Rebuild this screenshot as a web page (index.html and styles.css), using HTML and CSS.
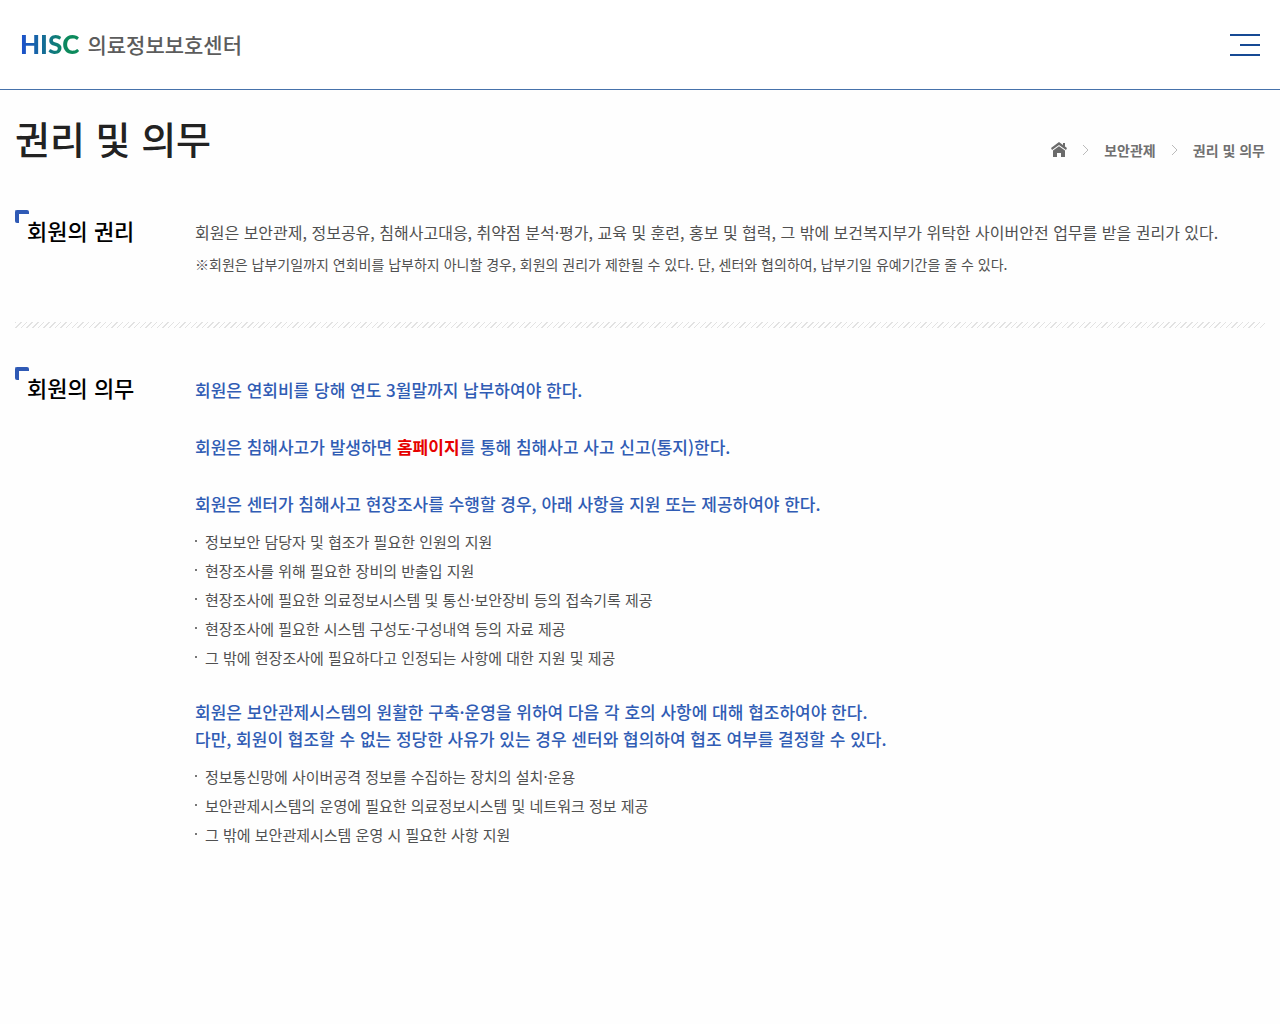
FILE: index.html
```
<!DOCTYPE html>
<html lang="ko">
<head>
<meta charset="utf-8">
<meta name="viewport" content="width=device-width, initial-scale=1">
<title>권리 및 의무 | 의료정보보호센터</title>
<link rel="stylesheet" href="styles.css">
</head>
<body>
<header class="site-header">
  <a class="logo" href="#"><span class="logo-mark">HISC</span><span class="logo-name">의료정보보호센터</span></a>
  <button class="menu-button" type="button" aria-label="메뉴">
    <svg width="30" height="22" viewBox="0 0 30 22" fill="#164a94" aria-hidden="true"><path d="M0 0h30v2H0zM10 10h20v2H10zM0 20h30v2H0z"/></svg>
  </button>
</header>
<main class="page">
  <div class="page-head">
    <h1>권리 및 의무</h1>
    <nav class="breadcrumb" aria-label="현재 위치">
      <a href="#" aria-label="홈"><svg width="16" height="16" viewBox="0 0 16 16" fill="#6b6b6b" aria-hidden="true"><path d="M8 0 0 6l1 2 7-5 7 5 1-2-2-1.500V1h-2v2zM8 4.300 2 8.600V15h4v-4h4v4h4V8.600z"/></svg></a>
      <svg width="7" height="12" viewBox="0 0 7 12" fill="none" stroke="#bbb" aria-hidden="true"><path d="m1 1 5 5-5 5"/></svg>
      <a href="#">보안관제</a>
      <svg width="7" height="12" viewBox="0 0 7 12" fill="none" stroke="#bbb" aria-hidden="true"><path d="m1 1 5 5-5 5"/></svg>
      <a href="#" aria-current="page">권리 및 의무</a>
    </nav>
  </div>
  <section class="section">
    <h2>회원의 권리</h2>
    <div class="section-body">
      <p class="text">회원은 보안관제, 정보공유, 침해사고대응, 취약점 분석·평가, 교육 및 훈련, 홍보 및 협력, 그 밖에 보건복지부가 위탁한 사이버안전 업무를 받을 권리가 있다.</p>
      <p class="note">※회원은 납부기일까지 연회비를 납부하지 아니할 경우, 회원의 권리가 제한될 수 있다. 단, 센터와 협의하여, 납부기일 유예기간을 줄 수 있다.</p>
    </div>
  </section>
  <hr class="divider">
  <section class="section">
    <h2>회원의 의무</h2>
    <div class="section-body">
      <p class="lead">회원은 연회비를 당해 연도 3월말까지 납부하여야 한다.</p>
      <p class="lead">회원은 침해사고가 발생하면 <a class="site-link" href="#">홈페이지</a>를 통해 침해사고 사고 신고(통지)한다.</p>
      <p class="lead">회원은 센터가 침해사고 현장조사를 수행할 경우, 아래 사항을 지원 또는 제공하여야 한다.</p>
      <ul class="items">
        <li>정보보안 담당자 및 협조가 필요한 인원의 지원</li>
        <li>현장조사를 위해 필요한 장비의 반출입 지원</li>
        <li>현장조사에 필요한 의료정보시스템 및 통신·보안장비 등의 접속기록 제공</li>
        <li>현장조사에 필요한 시스템 구성도·구성내역 등의 자료 제공</li>
        <li>그 밖에 현장조사에 필요하다고 인정되는 사항에 대한 지원 및 제공</li>
      </ul>
      <p class="lead">회원은 보안관제시스템의 원활한 구축·운영을 위하여 다음 각 호의 사항에 대해 협조하여야 한다.<br>다만, 회원이 협조할 수 없는 정당한 사유가 있는 경우 센터와 협의하여 협조 여부를 결정할 수 있다.</p>
      <ul class="items">
        <li>정보통신망에 사이버공격 정보를 수집하는 장치의 설치·운용</li>
        <li>보안관제시스템의 운영에 필요한 의료정보시스템 및 네트워크 정보 제공</li>
        <li>그 밖에 보안관제시스템 운영 시 필요한 사항 지원</li>
      </ul>
    </div>
  </section>
</main>
</body>
</html>
```

FILE: styles.css
```
*, *::before { box-sizing: border-box; margin: 0; padding: 0; }
body { font-family: "Noto Sans CJK KR", sans-serif; font-size: 16px; color: #505050; background: #fefefe; }
a { color: inherit; text-decoration: none; }

.site-header { display: flex; justify-content: space-between; align-items: center; height: 90px; padding: 0 20px; background: #fff; border-bottom: 1px solid #4672ab; }
.logo { display: flex; align-items: center; gap: 8px; padding-bottom: 2px; }
.logo-mark { font-family: Lato, sans-serif; font-weight: 900; font-size: 26px; background: linear-gradient(90deg, #1c4fd0, #0c8a5c 80%); -webkit-background-clip: text; background-clip: text; color: transparent; }
.logo-name { font-size: 21px; font-weight: 500; color: #5c5c5c; }
.menu-button { display: flex; border: 0; background: none; cursor: pointer; }

.page { padding: 18px 15px; }
.page-head { display: flex; justify-content: space-between; align-items: center; margin-bottom: 42px; }
h1 { font-size: 38px; font-weight: 500; line-height: 60px; color: #222; }
.breadcrumb { display: flex; align-items: center; gap: 15px; padding-top: 24px; font-size: 14px; line-height: 20px; font-weight: 700; color: #707070; }
.breadcrumb a, .breadcrumb svg { display: block; }

.section { display: grid; grid-template-columns: 180px 1fr; }
h2 { position: relative; padding: 4px 0 0 12px; font-size: 22px; font-weight: 500; line-height: 32px; color: #000; }
h2::before { content: ""; position: absolute; left: 0; top: 0; width: 14px; height: 13px; border: solid #2f5ab5; border-width: 4px 0 0 4px; border-radius: 2px; }
.section-body { padding-top: 9px; }
.text { line-height: 26px; }
.note { margin-top: 7px; font-size: 14px; line-height: 24px; }
.divider { height: 6px; margin: 46px 0 39px; border: 0; background: repeating-linear-gradient(135deg, #e2e2e2 0 1px, transparent 1px 4px); }

.lead { font-size: 17px; font-weight: 500; line-height: 27px; color: #305cb4; }
.lead + .lead { margin-top: 30px; }
.site-link { color: #e60000; font-weight: 700; }
.items { list-style: none; margin: 10px 0 26px; }
.items li { position: relative; padding-left: 10px; font-size: 15px; line-height: 29px; }
.items li::before { content: ""; position: absolute; left: 0; top: 13px; width: 2px; height: 2px; background: #777; }
```
